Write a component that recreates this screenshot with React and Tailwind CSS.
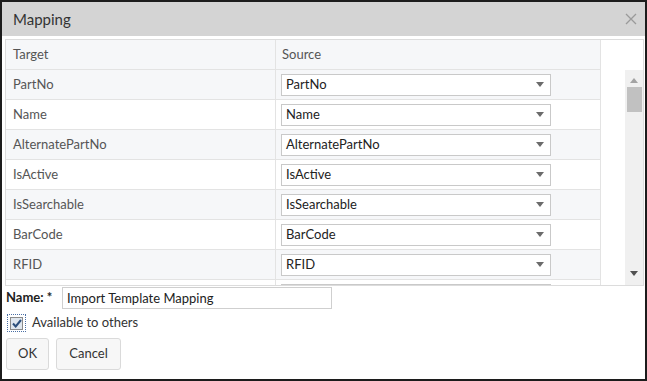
import { useState } from "react";

const fields = [
  "PartNo",
  "Name",
  "AlternatePartNo",
  "IsActive",
  "IsSearchable",
  "BarCode",
  "RFID",
  "",
];

function Caret() {
  return (
    <svg width="8" height="5" viewBox="0 0 8 5" className="shrink-0">
      <path d="M0 0h8L4 5z" fill="#6b6b6b" />
    </svg>
  );
}

function Dropdown({ value }) {
  return (
    <div className="w-[270px] h-[22px] border border-[#c9c9c9] bg-white flex items-center justify-between pl-[4px] pr-[6px] text-[13px] text-[#222]">
      <span>{value}</span>
      <Caret />
    </div>
  );
}

function Row({ field, odd }) {
  return (
    <div
      className={
        "flex h-[30px] border-b border-[#e3e3e3] shrink-0 " +
        (odd ? "bg-[#f6f7f9]" : "bg-white")
      }
    >
      <div className="w-[270px] border-r border-[#e3e3e3] flex items-center pl-[7px] text-[13px] text-[#555]">
        {field}
      </div>
      <div className="flex-1 flex items-center pl-[5px]">
        <Dropdown value={field} />
      </div>
    </div>
  );
}

export default function App() {
  const [name, setName] = useState("Import Template Mapping");
  const [shared, setShared] = useState(true);

  return (
    <div
      className="w-[647px] h-[381px] border-2 border-[#1c1c1c] bg-white flex flex-col"
      style={{ fontFamily: "Lato, 'Liberation Sans', sans-serif" }}
    >
      <div className="h-[34px] shrink-0 bg-[#d4d4d4] flex items-center justify-between pl-[11px] pr-[8px]">
        <span className="text-[15px] text-[#333]">Mapping</span>
        <svg width="12" height="12" viewBox="0 0 12 12">
          <path d="M1 1l10 10M11 1L1 11" stroke="#9a9a9a" strokeWidth="1.3" />
        </svg>
      </div>

      <div className="mt-[3px] ml-[3px] mr-[1px] h-[247px] shrink-0 border border-[#dcdcdc] flex overflow-hidden">
        <div className="w-[595px] border-r border-[#e3e3e3] flex flex-col overflow-hidden">
          <div className="flex h-[30px] shrink-0 border-b border-[#e3e3e3] bg-[#f6f7f9] text-[13px] text-[#555]">
            <div className="w-[270px] border-r border-[#e3e3e3] flex items-center pl-[7px]">
              Target
            </div>
            <div className="flex-1 flex items-center pl-[6px]">Source</div>
          </div>
          {fields.map((f, i) => (
            <Row key={i} field={f} odd={i % 2 === 0} />
          ))}
        </div>
        <div className="flex-1 flex flex-col">
          <div className="h-[30px] shrink-0" />
          <div className="flex-1 flex justify-end">
            <div className="w-[18px] bg-[#f0f0f0] flex flex-col items-center">
              <svg width="8" height="5" viewBox="0 0 8 5" className="mt-[8px]">
                <path d="M4 0l4 5H0z" fill="#a3a3a3" />
              </svg>
              <div className="mt-[4px] w-[15px] h-[25px] bg-[#c1c1c1]" />
              <div className="flex-1" />
              <svg width="8" height="5" viewBox="0 0 8 5" className="mb-[9px]">
                <path d="M0 0h8L4 5z" fill="#505050" />
              </svg>
            </div>
          </div>
        </div>
      </div>

      <div className="flex items-center mt-[1px] pl-[4px] h-[22px]">
        <span className="shrink-0 whitespace-nowrap w-[56px] text-[13px] font-bold text-[#222]">
          Name: *
        </span>
        <input
          value={name}
          onChange={(e) => setName(e.target.value)}
          className="w-[270px] h-[22px] border border-[#cfcfcf] px-[4px] py-0 text-[13px] leading-[20px] text-[#222] outline-none"
        />
      </div>

      <label className="flex items-center mt-[5px] pl-[5px] h-[18px] text-[13px] text-[#333]">
        <span
          className="w-[19px] h-[18px] border border-dotted border-[#4a6fa5] flex items-center justify-center"
          onClick={() => setShared(!shared)}
        >
          <span className="w-[13px] h-[13px] border border-[#8a8a8a] bg-[#dfe6ee] flex items-center justify-center">
            {shared ? (
              <svg width="10" height="9" viewBox="0 0 10 9">
                <path
                  d="M1 4.5l2.7 3L9 1"
                  stroke="#2d4f7c"
                  strokeWidth="2"
                  fill="none"
                />
              </svg>
            ) : null}
          </span>
        </span>
        <span className="ml-[6px]">Available to others</span>
      </label>

      <div className="flex gap-[7px] mt-[6px] pl-[4px]">
        <button className="w-[43px] h-[32px] rounded-[3px] border border-[#dadada] bg-[#f7f7f7] text-[13px] text-[#333]">
          OK
        </button>
        <button className="w-[65px] h-[32px] rounded-[3px] border border-[#dadada] bg-[#f7f7f7] text-[13px] text-[#333]">
          Cancel
        </button>
      </div>
    </div>
  );
}
